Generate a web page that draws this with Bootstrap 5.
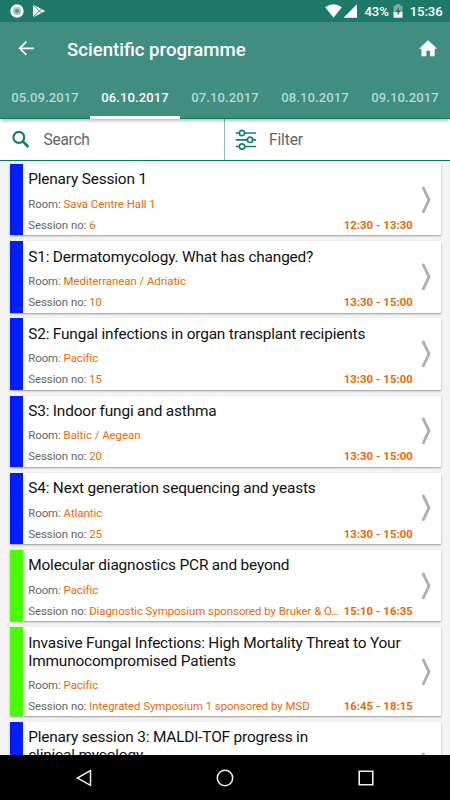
<!DOCTYPE html>
<html lang="en">
<head>
<meta charset="utf-8">
<meta name="viewport" content="width=device-width, initial-scale=1">
<title>Scientific programme</title>
<link href="https://cdn.jsdelivr.net/npm/bootstrap@5.3.0/dist/css/bootstrap.min.css" rel="stylesheet">
<style>
body{font-family:Roboto,"Liberation Sans",sans-serif;background:#f3f3f3;height:800px}
svg{display:block;flex:none}
.statusbar{height:22px;background:#1e7968;font-size:13.1px;font-weight:500;padding:0 7.5px 0 10px}
.pct{margin-left:7px;letter-spacing:-.05px;padding-top:1px}
.battery{margin-left:4px}
.clock{margin-left:7px;padding-top:1px;letter-spacing:-.1px}
.appbar{height:54px;background:#408e7f;padding:0 11px 0 16.7px}
.appbar h1{font-size:18.6px;font-weight:500;line-height:22px;margin:0 0 0 32.3px;padding-top:1px}
.tabs{height:43px;background:#408e7f;border-bottom:1px solid #0c7d69;position:relative;z-index:2;box-shadow:0 3px 3px -1px rgba(0,0,0,.25)}
.tabs .nav-link{width:90px;height:43px;padding:2px 0 0;line-height:39px;font-size:13.1px;font-weight:500;letter-spacing:.06px;color:#b9d7d1;border-bottom:3px solid transparent}
.tabs .nav-link.active{color:#fff;border-bottom-color:#fff}
.tools{height:42px;border-bottom:1px solid #0c7561;font-size:15.6px;color:#666}
.tools>div:first-child{border-right:1px solid #8abfb3}
.search-icon{margin-left:11.5px}
.search-label{margin-left:14px;letter-spacing:-.3px;padding-top:2px}
.filter-icon{margin-left:10px}
.filter-label{margin-left:12px;letter-spacing:-.15px;padding-top:2px}
.list{padding:3px 9px 0 10px}
.session{flex:none;min-height:71.4px;margin-bottom:5.8px;background:#fff;box-shadow:0 1px 2px rgba(0,0,0,.38);border-radius:1px}
.stripe{width:13.3px;flex:none;background:#001eff}
.stripe.sponsored{background:#48ff00}
.info{padding:6.4px 0 3px 4.9px;width:389.2px;flex:none;font-size:11.4px;letter-spacing:-.03px;line-height:13px;color:#666}
.info h2{font-size:15.4px;letter-spacing:-.17px;line-height:18px;font-weight:400;color:#111;margin:0 0 9.4px}
.orange{color:#eb6909}
.meta{margin-top:8px}
.time{font-weight:700;width:68.7px;flex:none;font-size:11.3px;letter-spacing:.05px}
.chevron{margin-left:9px}
.navbar-keys{height:45px;background:#000;gap:123px}
</style>
<script src="https://cdn.jsdelivr.net/npm/bootstrap@5.3.0/dist/js/bootstrap.bundle.min.js"></script>
</head>
<body class="d-flex flex-column overflow-hidden">
<header class="flex-shrink-0 text-white">
  <div class="statusbar d-flex align-items-center">
    <svg width="14" height="14" viewBox="0 0 14 14"><circle cx="7" cy="7" r="5.4" fill="#a5c9c2" stroke="#fff" stroke-width="2.6"/><circle cx="7" cy="7" r="2" fill="#53998b"/></svg>
    <svg class="ms-2" width="14" height="14" viewBox="0 0 14 14"><path d="M1 .5v13L13.2 7z" fill="#fff"/><path d="M1 .8 9.5 9M1 13.2 9.5 5" fill="none" stroke="#1e7968" stroke-width=".9"/></svg>
    <svg class="ms-auto" width="17" height="14" viewBox="0 0 17 14"><path d="M.2 3.3Q8.5-2.8 16.8 3.3L8.5 13.7z" fill="#fff"/></svg>
    <svg width="15" height="14" viewBox="0 0 15 14"><path d="M15 .2v13.5H1.5z" fill="#fff"/></svg>
    <span class="pct">43%</span>
    <svg class="battery" width="10" height="14" viewBox="0 0 10 14"><path d="M.5 1.7h2.4V.2h4.2v1.5h2.4V8h-9z" fill="#79aea4"/><path d="M.5 8h9v5.7h-9z" fill="#fff"/><path d="M5.7 3 2.3 8.3h2.2v3.2l3.3-5H5.7z" fill="#1e7968"/></svg>
    <span class="clock">15:36</span>
  </div>
  <div class="appbar d-flex align-items-center">
    <svg width="18" height="18" viewBox="0 0 18 18" fill="none" stroke="#fff" stroke-width="1.8"><path d="M17 8.3H3M9.3 1.7 2.7 8.3l6.6 6.6"/></svg>
    <h1>Scientific programme</h1>
    <svg class="ms-auto" width="22" height="18" viewBox="0 0 22 18"><path d="M11 .2 20.2 8.8H17.7V16.3H13v-5.6h-3.6v5.6H4.5V8.8H2z" fill="#fff"/></svg>
  </div>
  <nav class="tabs nav flex-nowrap text-center">
    <a class="nav-link" href="#">05.09.2017</a>
    <a class="nav-link active" href="#">06.10.2017</a>
    <a class="nav-link" href="#">07.10.2017</a>
    <a class="nav-link" href="#">08.10.2017</a>
    <a class="nav-link" href="#">09.10.2017</a>
  </nav>
</header>
<div class="tools row g-0 bg-white flex-shrink-0">
  <div class="col-6 d-flex align-items-center">
    <svg width="18" height="18" viewBox="0 0 18 18" fill="none" stroke="#12816e" stroke-width="2.2" class="search-icon"><circle cx="6.8" cy="6.4" r="5.4"/><path d="m10.7 10.3 5.7 5.7" stroke-width="2.7"/></svg>
    <span class="search-label">Search</span>
  </div>
  <div class="col-6 d-flex align-items-center">
    <svg class="filter-icon" width="22" height="22" viewBox="0 0 22 22" fill="none" stroke="#12816e" stroke-width="1.7"><path d="M.7 4h4M9.8 4H21M.7 10.8h11.6M17.5 10.8H21M.7 17.5h4M9.8 17.5H21"/><circle cx="7" cy="4" r="2.7"/><circle cx="15" cy="10.8" r="2.7"/><circle cx="7" cy="17.5" r="2.7"/></svg>
    <span class="filter-label">Filter</span>
  </div>
</div>
<main class="list d-flex flex-column flex-grow-1 overflow-hidden" id="list"></main>
<footer class="navbar-keys flex-shrink-0 d-flex align-items-center justify-content-center">
  <svg width="18" height="18" viewBox="0 0 18 18" fill="none" stroke="#eee" stroke-width="1.5"><path d="M15.5 1.5v14.8L2.3 9z"/></svg>
  <svg width="18" height="18" viewBox="0 0 18 18" fill="none" stroke="#eee" stroke-width="1.6"><circle cx="9" cy="9" r="7.7"/></svg>
  <svg width="18" height="18" viewBox="0 0 18 18" fill="none" stroke="#eee" stroke-width="1.6"><path d="M2.2 2.2h13.6v13.6H2.2z"/></svg>
</footer>
<script>
const sessions = [
  ["Plenary Session 1", "Sava Centre Hall 1", "6", "12:30 - 13:30"],
  ["S1: Dermatomycology. What has changed?", "Mediterranean / Adriatic", "10", "13:30 - 15:00"],
  ["S2: Fungal infections in organ transplant recipients", "Pacific", "15", "13:30 - 15:00"],
  ["S3: Indoor fungi and asthma", "Baltic / Aegean", "20", "13:30 - 15:00"],
  ["S4: Next generation sequencing and yeasts", "Atlantic", "25", "13:30 - 15:00"],
  ["Molecular diagnostics PCR and beyond", "Pacific", "Diagnostic Symposium sponsored by Bruker &amp; O…", "15:10 - 16:35", true],
  ["Invasive Fungal Infections: High Mortality Threat to Your<br>Immunocompromised Patients", "Pacific", "Integrated Symposium 1 sponsored by MSD", "16:45 - 18:15", true],
  ["Plenary session 3: MALDI-TOF progress in<br>clinical mycology", "", "", ""]
];
document.getElementById("list").innerHTML = sessions.map(([title, room, no, time, sponsored]) => `
  <article class="session d-flex">
    <div class="stripe ${sponsored ? "sponsored" : ""}"></div>
    <div class="info">
      <h2 class="text-nowrap">${title}</h2>
      <div>${room ? `Room: <span class="orange">${room}</span>` : "&nbsp;"}</div>
      <div class="meta d-flex justify-content-between text-nowrap"><span>${no ? `Session no: <span class="orange">${no}</span>` : "&nbsp;"}</span><span class="time orange">${time}</span></div>
    </div>
    <svg class="chevron align-self-center" width="12" height="28" viewBox="0 0 12 28" fill="none" stroke="#b0b0b0" stroke-width="2.9"><path d="M1.8 .8 8 13.8 1.8 26.8"/></svg>
  </article>`).join("");
</script>
</body>
</html>
